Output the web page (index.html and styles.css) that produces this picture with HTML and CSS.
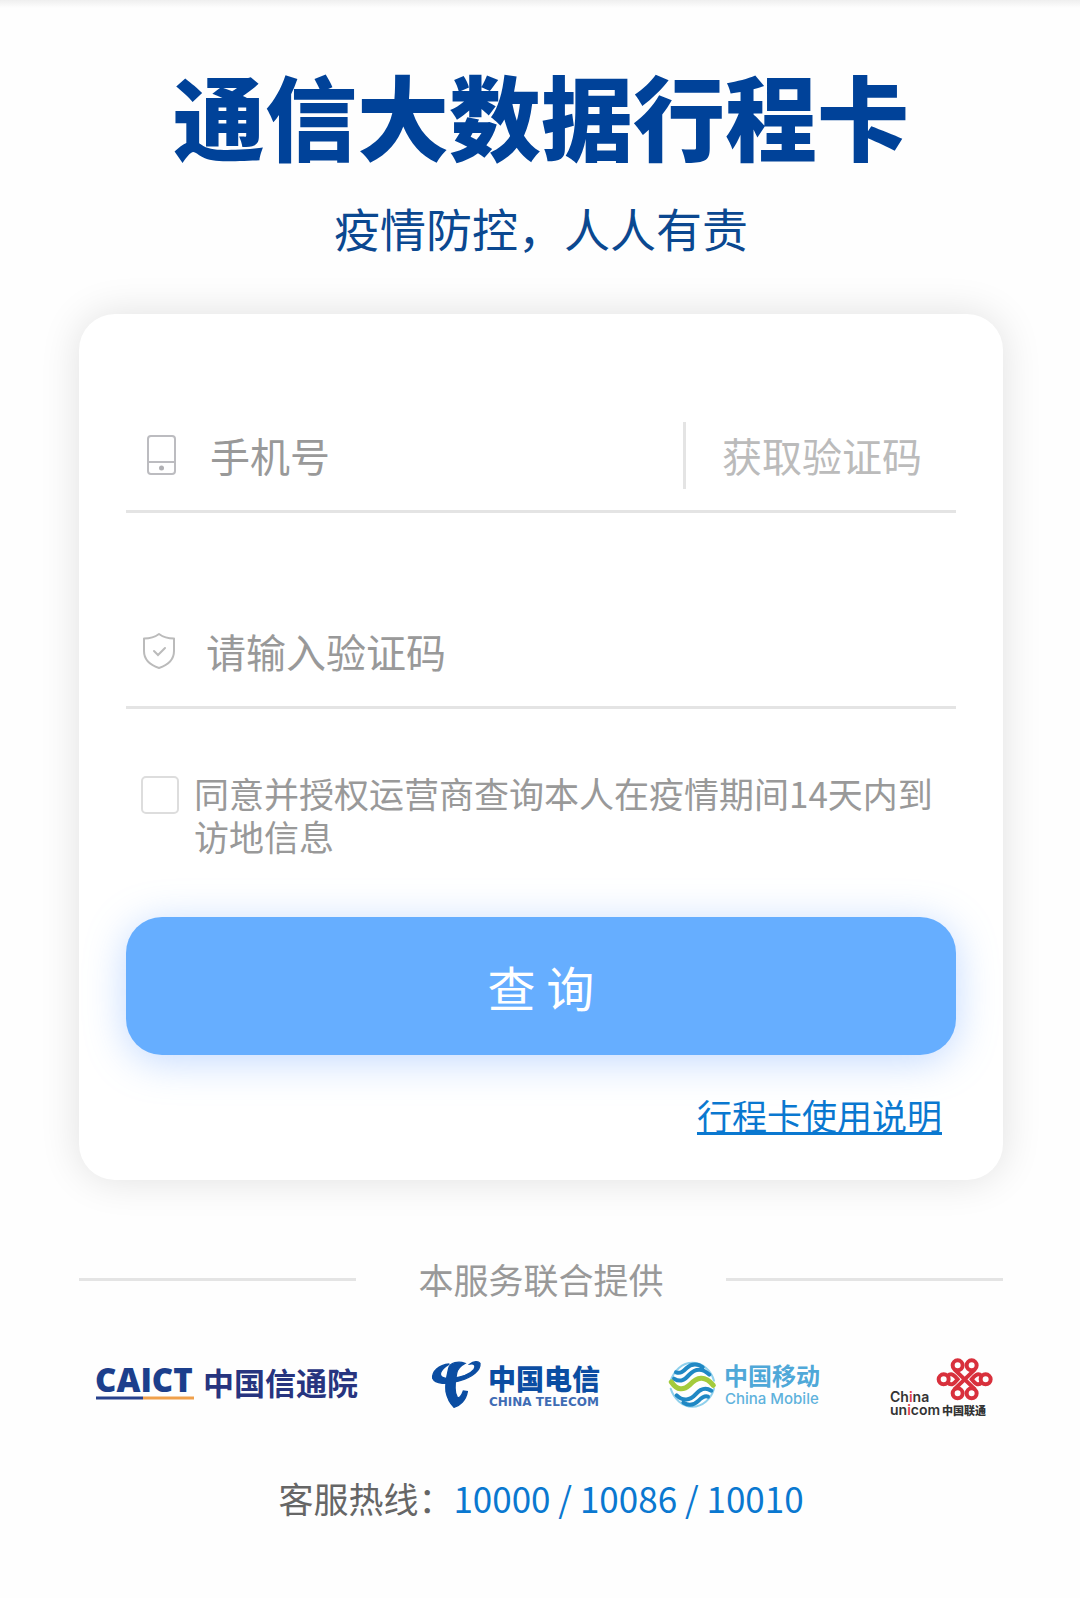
FILE: index.html
```html
<!DOCTYPE html>
<html lang="zh-CN">
<head>
    <meta charset="UTF-8">
    <meta name="viewport" content="width=device-width, initial-scale=1.0">
    <title>通信大数据行程卡</title>
    <link rel="stylesheet" href="styles.css">
</head>
<body>
    <div class="page">
        <h1 class="title">通信大数据行程卡</h1>
        <p class="slogan">疫情防控，人人有责</p>

        <form class="card">
            <div class="row">
                <label for="phone" aria-label="手机号">
                    <svg width="36" height="42" viewBox="0 0 36 42" fill="none" stroke="#bcbcc0" stroke-width="2">
                        <rect x="5" y="2" width="27" height="38" rx="3"/>
                        <path d="M5 28h27"/>
                        <circle cx="18.500" cy="34" r="2.500" fill="#b0b0b4" stroke="none"/>
                    </svg>
                </label>
                <input type="tel" id="phone" placeholder="手机号">
                <button type="button" class="get-code">获取验证码</button>
            </div>
            <div class="row">
                <label for="code" aria-label="验证码">
                    <svg width="32" height="38" viewBox="0 0 32 38" fill="none" stroke="#bbb" stroke-width="2">
                        <path d="M16 2C12 5 7 6.500 1 6.500V19C1 27 7 33 16 36C25 33 31 27 31 19V6.500C25 6.500 20 5 16 2Z" stroke-linejoin="round"/>
                        <path d="M11 19l4 4l7-7" stroke-linecap="round"/>
                    </svg>
                </label>
                <input type="text" id="code" placeholder="请输入验证码">
            </div>
            <div class="agree">
                <input type="checkbox" id="agree">
                <label for="agree">同意并授权运营商查询本人在疫情期间14天内到访地信息</label>
            </div>
            <button type="submit" class="query">查 询</button>
            <a class="help" href="#">行程卡使用说明</a>
        </form>

        <div class="union">本服务联合提供</div>

        <div class="logos">
            <!-- 信通院 -->
            <svg width="268" height="58" viewBox="0 0 268 58">
                <text class="caict" x="0" y="35">CAICT</text>
                <path d="M1 41h47" stroke="#27408c" stroke-width="3"/>
                <path d="M48 41h51" stroke="#f0a04b" stroke-width="3"/>
                <text class="caict-cn" x="108" y="38">中国信通院</text>
            </svg>
            <!-- 电信 -->
            <svg width="170" height="58" viewBox="0 0 170 58">
                <g transform="translate(-21 -17) scale(.3333)" fill="#0b4da2" stroke="#0b4da2" stroke-width="4">
                    <path d="M118 72C85 75 66 95 68 115C75 132 110 135 150 122C190 110 212 90 210 70C205 62 190 64 180 72C195 70 198 78 192 88C180 103 150 112 125 115C100 118 88 110 92 98C96 85 108 78 118 72Z"/>
                    <path d="M165 70C145 62 120 68 116 85C110 110 105 130 108 155C112 175 120 190 132 202C150 198 168 180 172 155L160 153C155 168 148 175 142 172C134 160 134 130 140 100C142 88 150 78 165 70Z"/>
                </g>
                <text class="telecom-cn" x="57" y="33">中国电信</text>
                <text class="telecom-en" x="58" y="49">CHINA TELECOM</text>
            </svg>
            <!-- 移动 -->
            <svg width="152" height="58" viewBox="0 0 152 58">
                <g transform="translate(-20 -17) scale(.3333)" fill="none" stroke-linecap="round">
                    <path d="M62 122C72 92 96 68 127 68C158 68 184 92 192 122" stroke="#8fd0ec" stroke-width="6"/>
                    <path d="M62 146C72 176 96 200 127 200C158 200 184 176 192 146" stroke="#8fd0ec" stroke-width="6"/>
                    <path d="M78 97C92 102 100 94 110 84C124 70 144 70 158 82" stroke="#2088c4" stroke-width="12"/>
                    <path d="M72 116C92 128 104 120 118 104C136 84 158 84 178 104" stroke="#2088c4" stroke-width="12"/>
                    <path d="M64 126C82 152 100 152 120 134C140 112 164 104 190 136" stroke="#a4cb3c" stroke-width="15"/>
                    <path d="M80 166C98 184 120 182 136 164C150 148 164 140 184 152" stroke="#2088c4" stroke-width="12"/>
                    <path d="M100 188C116 198 132 196 146 182C156 172 164 166 174 170" stroke="#2088c4" stroke-width="12"/>
                </g>
                <text class="mobile-cn" x="54" y="28">中国移动</text>
                <text class="mobile-en" x="55" y="47">China Mobile</text>
            </svg>
            <!-- 联通 -->
            <svg width="104" height="58" viewBox="0 0 104 58">
                <g transform="translate(-21 -17) scale(.3333)" fill="none" stroke="#d8303c" stroke-width="12">
                    <circle cx="224" cy="118" r="15"/>
                    <circle cx="350" cy="118" r="15"/>
                    <circle cx="266" cy="76" r="15"/>
                    <circle cx="308" cy="76" r="15"/>
                    <circle cx="266" cy="160" r="15"/>
                    <circle cx="308" cy="160" r="15"/>
                    <path d="M256 88L318 148"/>
                    <path d="M318 88L256 148"/>
                    <path d="M236 108C248 96 258 108 266 118C258 128 248 140 236 128"/>
                    <path d="M338 108C326 96 316 108 308 118C316 128 326 140 338 128"/>
                </g>
                <text class="unicom" x="0" y="45">Ch<tspan class="red">i</tspan>na</text>
                <text class="unicom" x="0" y="58">un<tspan class="red">i</tspan>com</text>
                <text class="unicom-cn" x="52" y="58">中国联通</text>
            </svg>
        </div>

        <p class="hotline">客服热线：<a href="tel:10000">10000</a><span> / </span><a href="tel:10086">10086</a><span> / </span><a href="tel:10010">10010</a></p>
    </div>
</body>
</html>
```

FILE: styles.css
```css
*{
    margin: 0;
    padding: 0;
    box-sizing: border-box;
}
body{
    background: #fefefe;
    color: #999;
    font-family: "Noto Sans CJK SC", sans-serif;
    font-size: 35px;
    line-height: 50px;
}
input, button{
    border: none;
    background: none;
    outline: none;
    font-family: inherit;
    font-size: 40px;
}
svg{
    display: block;
    overflow: visible;
}
.page{
    padding: 68px 77px 60px 79px;
    background: linear-gradient(#efefef, #fefefe 8px);
}
.title{
    color: #004299;
    font-size: 92px;
    font-weight: 900;
    line-height: 92px;
    text-align: center;
}
.slogan{
    margin-top: 42px;
    color: #0b4890;
    font-size: 46px;
    text-align: center;
}
/* 表单卡片 */
.card{
    display: flex;
    flex-direction: column;
    margin-top: 62px;
    padding: 86px 47px 40px;
    border-radius: 36px;
    background: #fff;
    box-shadow: 0 0 40px rgba(0, 0, 0, .12);
}
.row{
    display: flex;
    align-items: center;
    height: 113px;
    padding-left: 17px;
    border-bottom: 3px solid #e4e4e4;
}
.row + .row{
    margin-top: 83px;
}
.row input{
    flex: 1;
    min-width: 0;
    height: 66px;
    margin-left: 31px;
    color: #666;
}
.row input::placeholder{
    color: #999;
}
.get-code{
    height: 67px;
    padding: 0 34px 0 36px;
    border-left: 3px solid #e4e4e4;
    color: #bbb;
}
.agree{
    display: flex;
    align-items: flex-start;
    margin-top: 62px;
    padding: 0 10px 0 15px;
    line-height: 43px;
}
.agree input{
    appearance: none;
    flex: none;
    width: 38px;
    height: 38px;
    margin: 5px 15px 0 0;
    border: 2px solid #ddd;
    border-radius: 5px;
}
.agree input:checked{
    background: #66aeff;
}
.query{
    height: 138px;
    margin-top: 60px;
    border-radius: 36px;
    background: #66aeff;
    box-shadow: 0 6px 40px rgba(102, 160, 255, .4);
    color: #fff;
    font-size: 48px;
}
.help{
    align-self: flex-end;
    margin: 35px 14px 0 0;
    color: #0a78d0;
}
.union{
    display: flex;
    align-items: center;
    justify-content: space-between;
    margin-top: 74px;
}
.union::before, .union::after{
    content: "";
    width: 30%;
    height: 3px;
    background: #e4e4e4;
}
/* 合作单位 */
.logos{
    display: flex;
    justify-content: space-between;
    margin-top: 53px;
    padding: 0 9px 0 16px;
}
.caict{
    fill: #1c3f8c;
    font: 800 33px "Open Sans", sans-serif;
}
.caict-cn{
    fill: #27347f;
    font-size: 31px;
    font-weight: bold;
}
.telecom-cn{
    fill: #0b4da2;
    font-size: 28px;
    font-weight: 900;
}
.telecom-en{
    fill: #3f6cb4;
    font: bold 12px "DejaVu Sans", sans-serif;
}
.mobile-cn{
    fill: #4fa8d8;
    font-size: 24px;
    font-weight: bold;
}
.mobile-en{
    fill: #5fb2dc;
    font: 500 15px Inter, sans-serif;
}
.unicom{
    fill: #333;
    font: 600 14px Inter, sans-serif;
}
.unicom-cn{
    fill: #333;
    font-size: 11px;
    font-weight: 900;
}
.red{
    fill: #e0404a;
}
.hotline{
    margin-top: 58px;
    color: #666;
    text-align: center;
}
.hotline a{
    text-decoration: none;
}
.hotline a, .hotline span{
    color: #0a78d0;
}
```
